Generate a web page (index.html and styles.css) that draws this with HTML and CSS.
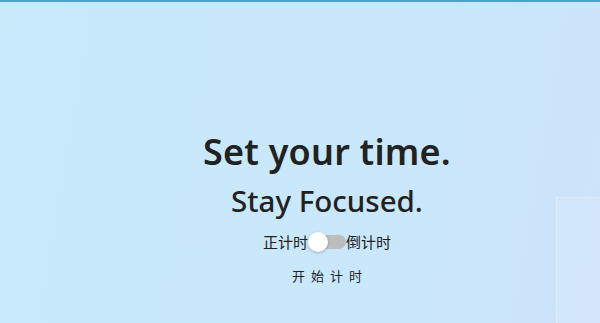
FILE: index.html
```html
<!DOCTYPE html>
<html lang="zh-CN">
<head>
    <meta charset="UTF-8">
    <meta name="viewport" content="width=device-width, initial-scale=1.0">
    <title>Focus Timer</title>
    <link rel="stylesheet" href="styles.css">
</head>
<body>

    <div class="page">
        <div class="side-panel"></div>

        <div class="hero">
            <h1 class="title">Set your time.</h1>
            <h2 class="subtitle">Stay Focused.</h2>

            <div class="mode-switch">
                <span class="mode-label">正计时</span>
                <label class="switch">
                    <span class="track"></span>
                    <span class="knob"></span>
                </label>
                <span class="mode-label">倒计时</span>
            </div>

            <button class="start-btn">开始计时</button>
        </div>
    </div>

</body>
</html>
```

FILE: styles.css
```css
html, body {
    margin: 0;
    padding: 0;
    height: 100%;
}
body {
    font-family: "Noto Sans", "Noto Sans CJK SC", sans-serif;
    color: #222;
    background: linear-gradient(100deg, #c8eafb 0%, #c9e8fb 55%, #cde3fa 100%);
    border-top: 2px solid #3faac6;
    box-sizing: border-box;
    overflow: hidden;
}
.page {
    position: relative;
    height: 100%;
    padding-left: 54px;
    display: flex;
    flex-direction: column;
    align-items: center;
}
.side-panel {
    position: absolute;
    left: 556px;
    top: 195px;
    width: 60px;
    height: 140px;
    background: rgba(255, 255, 255, 0.12);
    border-left: 1px solid rgba(255, 255, 255, 0.35);
    border-top: 1px solid rgba(255, 255, 255, 0.2);
}
.hero {
    margin-top: 127px;
    display: flex;
    flex-direction: column;
    align-items: center;
}
.title {
    margin: 0;
    font-size: 36px;
    font-weight: 600;
    line-height: 46px;
    letter-spacing: 0.2px;
}
.subtitle {
    margin: 6px 0 0 0;
    font-size: 29.5px;
    font-weight: 500;
    line-height: 40px;
}
.mode-switch {
    display: flex;
    align-items: center;
    margin-top: 10px;
    font-family: "Noto Sans CJK SC", sans-serif;
    font-size: 15px;
}
.switch {
    position: relative;
    width: 38px;
    height: 20px;
    cursor: pointer;
}
.track {
    position: absolute;
    left: 4px;
    right: 0;
    top: 3px;
    height: 14px;
    border-radius: 7px;
    background: #bdbdbd;
}
.knob {
    position: absolute;
    left: 0;
    top: 0;
    width: 20px;
    height: 20px;
    border-radius: 50%;
    background: #fff;
    box-shadow: 0 1px 3px rgba(0, 0, 0, 0.25);
}
.start-btn {
    margin-top: 10px;
    background: none;
    border: none;
    padding: 4px 8px;
    font-family: "Noto Sans CJK SC", sans-serif;
    font-size: 13px;
    color: #222;
    letter-spacing: 6px;
    text-indent: 6px;
    cursor: pointer;
}
```
